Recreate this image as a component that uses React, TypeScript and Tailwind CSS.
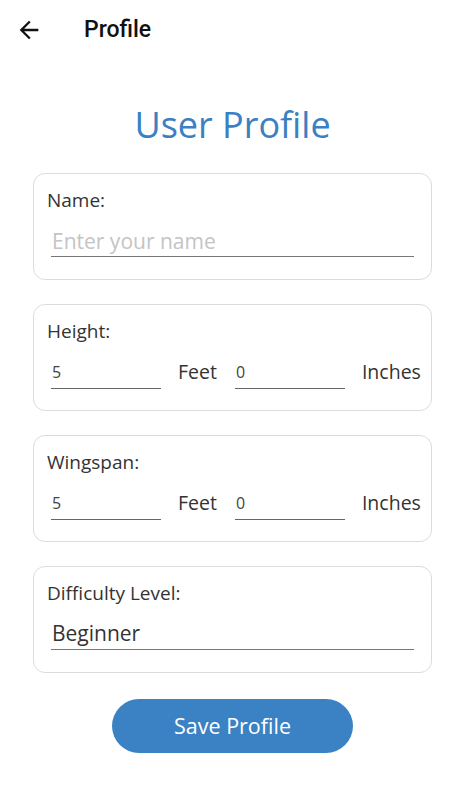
import React from "react";
import { MdArrowBack } from "react-icons/md";

export default function App() {
  return (
    <div className="w-[469px] h-[792px] bg-white font-['Open_Sans',sans-serif] text-[#333]">
      <div className="h-[60px] flex items-center">
        <MdArrowBack className="ml-[15px] text-[#111]" size={28} />
        <span className="ml-[41px] font-['Roboto',sans-serif] font-medium text-[23px] text-[#111]">
          Profile
        </span>
      </div>

      <div className="w-[465px] flex flex-col items-center">
        <h1 className="mt-[41px] text-[36px] leading-[48px] text-[#3a80c2]">User Profile</h1>

        <div className="mt-[24px] w-[399px] flex flex-col gap-[24px]">
          <Card label="Name:">
            <div className="mt-[15px] mx-[4px] border-b border-[#777] pb-[1px]">
              <input
                className="w-full text-[21px] leading-[28px] h-[28px] px-[1px] outline-none placeholder:text-[#c4c4c4]"
                placeholder="Enter your name"
              />
            </div>
          </Card>
          <Card label="Height:" rowCard>
            <SizeRow />
          </Card>
          <Card label="Wingspan:" rowCard>
            <SizeRow />
          </Card>
          <Card label="Difficulty Level:">
            <div className="mt-[14px] mx-[4px] border-b border-[#777] pb-[2px]">
              <div className="text-[21px] leading-[28px] h-[28px] px-[1px] text-[#333]">Beginner</div>
            </div>
          </Card>
        </div>

        <button className="mt-[26px] w-[241px] h-[54px] rounded-full bg-[#3b82c4] text-white text-[21.5px]">
          Save Profile
        </button>
      </div>
    </div>
  );
}

const Card = (props: { label: string; rowCard?: boolean; children: React.ReactNode }) => {
  return (
    <div
      className={
        "border border-[#dcdcdc] rounded-xl pt-[14px] px-[13px] " +
        (props.rowCard ? "pb-[21px]" : "pb-[22px]")
      }
    >
      <div className="text-[19px] leading-6 text-[#333]">{props.label}</div>
      {props.children}
    </div>
  );
};

const SizeRow = () => {
  return (
    <div className="mt-[19px] flex items-start">
      <UnderlineValue value="5" />
      <span className="shrink-0 ml-[17px] text-[19.5px] leading-[20px]">Feet</span>
      <UnderlineValue value="0" className="ml-[18px]" />
      <span className="shrink-0 ml-[17px] text-[19.5px] leading-[20px]">Inches</span>
    </div>
  );
};

const UnderlineValue = (props: { value: string; className?: string }) => {
  return (
    <div className={"shrink-0 w-[110px] border-b border-[#666] pb-[6px] " + (props.className ?? "ml-[4px]")}>
      <div className="text-[16px] leading-[20px] px-[1px] text-[#444]">{props.value}</div>
    </div>
  );
};
